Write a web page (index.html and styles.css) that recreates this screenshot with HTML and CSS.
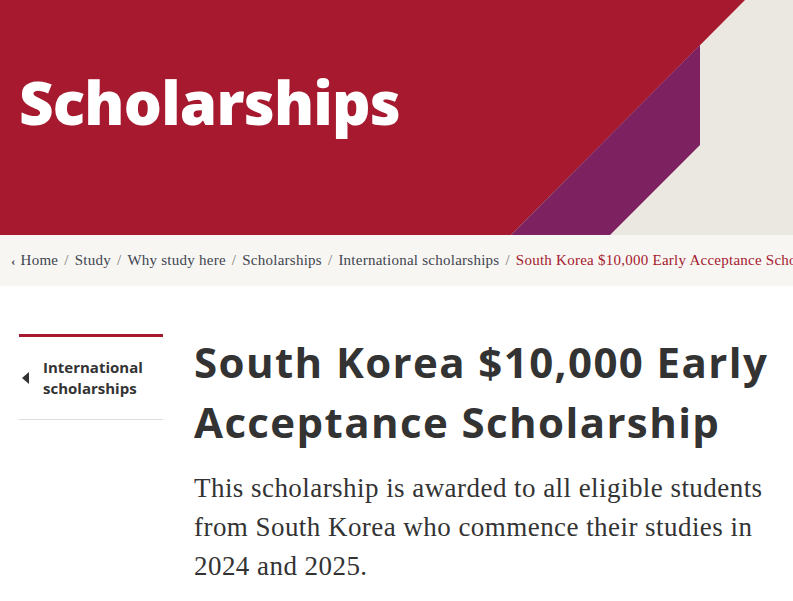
FILE: index.html
```html
<!DOCTYPE html>
<html lang="en">
<head>
  <meta charset="UTF-8" />
  <meta name="viewport" content="width=device-width, initial-scale=1.0" />
  <title>South Korea $10,000 Early Acceptance Scholarship</title>
  <link rel="stylesheet" href="styles.css">
</head>
<body>

  <header class="banner">
    <svg class="banner-shapes" width="793" height="235" viewBox="0 0 793 235" aria-hidden="true">
      <polygon points="0,0 745,0 511,235 0,235" fill="#a6192e" />
      <polygon points="700,45 700,145 610,235 511,235" fill="#7d2161" />
    </svg>
    <h1 class="banner-title">Scholarships</h1>
  </header>

  <nav class="breadcrumb">
    <span class="crumb-back">&lsaquo;</span>
    <a href="#">Home</a><span class="sep">/</span>
    <a href="#">Study</a><span class="sep">/</span>
    <a href="#">Why study here</a><span class="sep">/</span>
    <a href="#">Scholarships</a><span class="sep">/</span>
    <a href="#">International scholarships</a><span class="sep">/</span>
    <span class="current">South Korea $10,000 Early Acceptance Scholarship</span>
  </nav>

  <div class="page">
    <aside class="side-nav">
      <a href="#" class="side-link">
        <span class="side-arrow"></span>
        <span>International scholarships</span>
      </a>
    </aside>

    <main class="content">
      <h2 class="content-title">South Korea $10,000 Early Acceptance Scholarship</h2>
      <p class="lead">This scholarship is awarded to all eligible students from South Korea who commence their studies in 2024 and 2025.</p>
    </main>
  </div>

</body>
</html>
```

FILE: styles.css
```css
body {
  margin: 0;
  padding: 0;
  background-color: #fff;
  color: #333;
  font-family: "Liberation Serif", serif;
  overflow: hidden;
}
.banner {
  position: relative;
  height: 235px;
  background-color: #ebe8e1;
  overflow: hidden;
}
.banner-shapes {
  position: absolute;
  top: 0;
  left: 0;
}
.banner-title {
  position: relative;
  margin: 0;
  padding: 62px 0 0 19px;
  color: #fff;
  font-family: "Open Sans", sans-serif;
  font-weight: 800;
  font-size: 60px;
  line-height: 80px;
  letter-spacing: -0.8px;
}
.breadcrumb {
  height: 51px;
  background-color: #f7f6f2;
  display: flex;
  align-items: center;
  padding-left: 11px;
  font-family: "Liberation Serif", serif;
  font-size: 15px;
  letter-spacing: 0.25px;
  white-space: nowrap;
  overflow: hidden;
}
.breadcrumb a {
  color: #3f4450;
  text-decoration: none;
}
.crumb-back {
  color: #3f4450;
  margin-right: 5px;
  font-size: 13px;
  font-weight: 700;
}
.sep {
  color: #777;
  margin: 0 6px;
}
.current {
  color: #a6192e;
}
.page {
  display: flex;
  padding: 48px 0 0 19px;
  gap: 31px;
}
.side-nav {
  width: 144px;
  flex-shrink: 0;
  border-top: 3px solid #a6192e;
  border-bottom: 1px solid #ddd;
  height: 82px;
}
.side-link {
  display: flex;
  align-items: center;
  gap: 14px;
  padding: 20px 0 0 3px;
  color: #333;
  text-decoration: none;
  font-family: "Open Sans", sans-serif;
  font-weight: 700;
  font-size: 15px;
  line-height: 21px;
}
.side-arrow {
  width: 0;
  height: 0;
  border-top: 6px solid transparent;
  border-bottom: 6px solid transparent;
  border-right: 7px solid #333;
  flex-shrink: 0;
}
.content {
  flex: 1;
  padding-right: 20px;
}
.content-title {
  margin: -2px 0 0;
  font-family: "Open Sans", sans-serif;
  font-weight: 700;
  font-size: 42px;
  line-height: 60px;
  letter-spacing: 1.4px;
  color: #333;
}
.lead {
  margin: 17px 0 0;
  font-family: "Liberation Serif", serif;
  font-size: 27px;
  line-height: 39px;
  letter-spacing: 0.45px;
  color: #333;
}
```
